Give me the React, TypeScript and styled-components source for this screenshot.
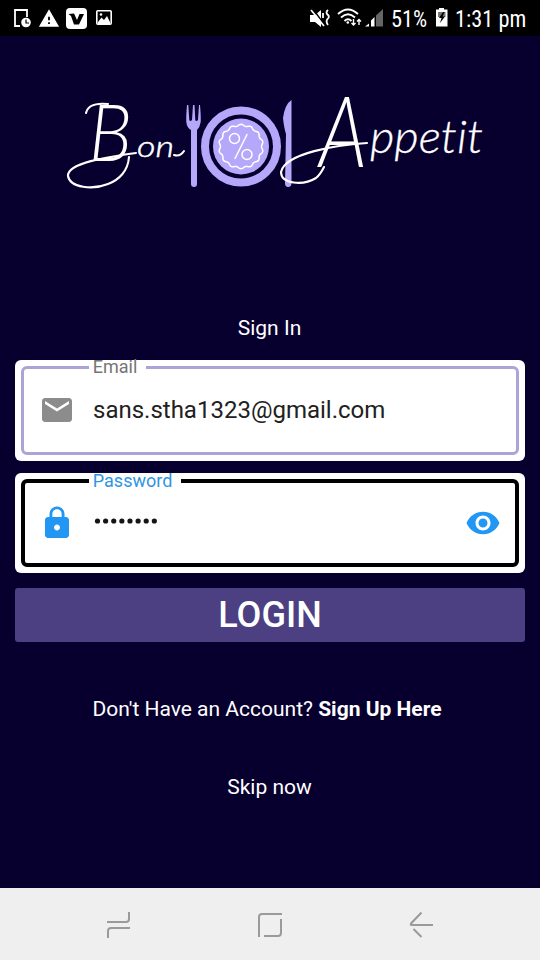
import React from "react";
import styled, { createGlobalStyle } from "styled-components";
import { MdEmail, MdLock, MdVisibility, MdWarning } from "react-icons/md";

const GlobalStyle = createGlobalStyle`
  * { box-sizing: border-box; }
  body { margin: 0; background: #07002f; }
`;

const Screen = styled.div`
  width: 540px;
  height: 960px;
  display: flex;
  flex-direction: column;
  background: #07002f;
  color: #fff;
  font-family: Roboto, sans-serif;
  overflow: hidden;
`;

const StatusBar = styled.header`
  height: 36px;
  flex: none;
  display: flex;
  justify-content: space-between;
  background: #000;
`;

const StatusText = styled.span<{ $width: number }>`
  display: inline-block;
  width: ${(p) => p.$width}px;
  font-family: "Roboto Condensed", Roboto, sans-serif;
  font-size: 24px;
  line-height: 38px;
  white-space: nowrap;
  transform: scaleX(0.93);
  transform-origin: left;
`;

const StatusGroup = styled.div`
  display: flex;
`;

const Content = styled.main`
  flex: 1;
  display: flex;
  flex-direction: column;
  align-items: center;
  padding: 49px 15px 0;
`;

const Logo = styled.svg`
  width: 430px;
  height: 115px;
  margin-left: 10px;
  flex: none;
  overflow: visible;
  font-variant-ligatures: none;
`;

const Heading = styled.h1`
  margin: 115px 1px 0 0;
  height: 26px;
  font-size: 21px;
  font-weight: 400;
  line-height: 26px;
`;

const FieldCard = styled.div<{ $top: number }>`
  width: 510px;
  height: 100.5px;
  flex: none;
  margin-top: ${(p) => p.$top}px;
  padding: 6px;
  border-radius: 6px;
  background: #fff;
`;

const FieldOutline = styled.div<{ $color: string; $line: number }>`
  position: relative;
  height: 88.5px;
  display: flex;
  align-items: center;
  padding: 0 ${(p) => 18 - p.$line}px;
  border: ${(p) => p.$line}px solid ${(p) => p.$color};
  border-radius: 6px;
`;

const FieldLabel = styled.label<{ $color: string; $width: number; $line: number; $top: number }>`
  position: absolute;
  left: ${(p) => 67.5 - p.$line}px;
  top: ${(p) => p.$top - p.$line}px;
  width: ${(p) => p.$width}px;
  padding-left: 4.3px;
  background: #fff;
  color: ${(p) => p.$color};
  font-size: 18px;
  line-height: 14px;
  white-space: nowrap;
`;

const FieldIcon = styled.span<{ $color: string }>`
  display: flex;
  width: 36px;
  color: ${(p) => p.$color};
`;

const TrailingIcon = styled(FieldIcon)`
  margin-right: 1px;
`;

const FieldValue = styled.span`
  flex: 1;
  margin-left: 18px;
  color: #212121;
  font-size: 24px;
  line-height: 30px;
`;

const Mask = styled.svg`
  flex: 1;
  height: 8px;
  margin: -3px 0 0 18px;
  fill: #151515;
`;

const LoginButton = styled.button`
  width: 510px;
  height: 54px;
  flex: none;
  margin-top: 15px;
  padding: 0;
  border: 0;
  border-radius: 3px;
  background: #4c4083;
  color: #fff;
  font: 500 36px/54px Roboto, sans-serif;
`;

const Prompt = styled.p<{ $top: number; $shift: number }>`
  margin: ${(p) => p.$top}px ${(p) => p.$shift}px 0 0;
  font-size: 21px;
  line-height: 26px;
  white-space: nowrap;
`;

const NavBar = styled.nav`
  height: 72px;
  flex: none;
  display: grid;
  grid-template-columns: repeat(3, 28px);
  column-gap: 123px;
  justify-content: center;
  align-items: center;
  background: #efefef;
`;

const NavIcon = styled.svg`
  width: 28px;
  height: 28px;
  fill: none;
  stroke: #9a9a9a;
  stroke-width: 2;
`;

function badgePath() {
  const pts: string[] = [];
  const n = 14;
  for (let i = 0; i <= 140; i++) {
    const a = (i / 140) * Math.PI * 2;
    const r = 21.4 + 0.9 * Math.cos(n * a);
    pts.push(`${(241 + r * Math.sin(a)).toFixed(2)} ${(146.5 - r * Math.cos(a)).toFixed(2)}`);
  }
  return `M${pts.join("L")}Z`;
}

function BrandLogo() {
  return (
    <Logo viewBox="60 85 430 115" aria-label="Bon Appetit">
      <g fill="#b5a7fa">
        <path d="M187 105Q186 116 186.300 122Q187 128 191 130V184Q191 187 194 187Q197 187 197 184V130Q200 127 200.700 122Q201 116 200 105H199L198 120Q196 122 195.300 120L194.500 105H193L192 120Q190 122 189.300 120L188.300 105Z" />
        <path d="M291.500 100Q285 104 283 118Q284 128 286 134L285 183Q285 187 288 187Q291.500 187 291.500 183Z" />
        <circle cx="241" cy="146.500" r="28" />
      </g>
      <circle cx="241" cy="146.500" r="36" fill="none" stroke="#b5a7fa" strokeWidth="8" />
      <g fill="none" stroke="#fff" strokeWidth="1.500" strokeLinecap="round">
        <path d={badgePath()} />
        <circle cx="234.500" cy="138.500" r="5" />
        <circle cx="247" cy="154.500" r="5" />
        <path d="M247 134.500L235 158.500" />
      </g>
      <g fill="none" stroke="#fff" strokeWidth="2.100" strokeLinecap="round">
        <path d="M136 153C107 157 67 163 68 176C70 188 93 190 108 184C119 180 128 171 129 157" />
        <path d="M86 113C88 104 98 103 108 104" />
        <path d="M367 143C337 145 285 153 281 172C281 184 303 186 316 178C320 175 322 171 324 167" />
        <path d="M174 155Q180 157 184 151" />
      </g>
      <g fill="#fff" fontFamily="Lato, sans-serif" fontStyle="italic" fontWeight="300">
        <text y="161">
          <tspan x="89" fontSize="79" textLength="43" lengthAdjust="spacingAndGlyphs">B</tspan>
          <tspan x="137" y="157" fontSize="29" stroke="#fff" strokeWidth="0.5" textLength="37" lengthAdjust="spacingAndGlyphs">on</tspan>
        </text>
        <text y="167">
          <tspan x="319" fontSize="99" textLength="48" lengthAdjust="spacingAndGlyphs">A</tspan>
          <tspan x="370" y="153" fontSize="45" stroke="#fff" strokeWidth="0.3" textLength="113" lengthAdjust="spacingAndGlyphs">ppetit</tspan>
        </text>
      </g>
    </Logo>
  );
}

function NotificationIcons() {
  return (
    <svg width="120" height="36" viewBox="0 0 120 36">
      <path d="M27 17V10H15V26H20" fill="none" stroke="#fff" strokeWidth="1.800" />
      <circle cx="26" cy="22.500" r="4.800" fill="#fff" />
      <path d="M26 19.500V23H29" fill="none" stroke="#000" strokeWidth="1.200" />
      <MdWarning x="38" y="7.500" size="22" color="#fff" />
      <rect x="66" y="8" width="21" height="21" rx="4" fill="#fff" />
      <path d="M68.500 14L74 13.500L77 20L79.500 14H84L79 24.500H74L71 16Z" fill="#000" />
      <rect x="96.800" y="10.800" width="14.400" height="13.400" rx="1" fill="none" stroke="#fff" strokeWidth="1.600" />
      <path d="M98 22L101.500 17.500L104 20L107 16L110 22V24H98Z" fill="#fff" />
      <circle cx="101" cy="14.500" r="1.300" fill="#fff" />
    </svg>
  );
}

function SignalIcons() {
  return (
    <svg width="83" height="36" viewBox="308 0 83 36">
      <path d="M310 15H315L321 10V27L315 22H310Z" fill="#fff" />
      <path d="M313 9L326 27" stroke="#000" strokeWidth="1.500" />
      <path d="M311 10L324 26" stroke="#fff" strokeWidth="1.700" />
      <path d="M328 10Q325 12.500 328 15Q330 17 327.500 19Q325.500 21.500 328 25M323 13V18" fill="none" stroke="#fff" strokeWidth="1.800" />
      <g fill="none" stroke="#fff" strokeWidth="1.800">
        <path d="M338 14Q348 5 358 14M341 17.500Q348 11 355 17.500M344.500 21Q348 17.500 351.500 21" />
        <path d="M353.500 19V25M351.500 23L353.500 25L355.500 23M359 25V19.500M357 21.500L359 19.500L361 21.500" strokeWidth="1.400" />
      </g>
      <circle cx="347.800" cy="22.500" r="1.300" fill="#fff" />
      <path d="M365 26.500L369 23.500V26.500ZM371 26.500V20.500L374.500 17V26.500Z" fill="#fff" />
      <path d="M376 26.500V15.500L383 9V26.500Z" fill="#666" />
    </svg>
  );
}

const BatterySvg = styled.svg`
  margin-right: 6px;
`;

function BatteryIcon() {
  return (
    <BatterySvg width="14" height="36" viewBox="0 0 14 36">
      <path d="M4 8H9V9.500H12.500V26.500H1V9.500H4Z" fill="#fff" />
      <path d="M3 12H10.500V17H3Z" fill="#777" />
      <path d="M8 12L4 18H6.500L5 23L10 16.500H7.500L9.500 12Z" fill="#000" />
    </BatterySvg>
  );
}

export default function App() {
  return (
    <>
      <GlobalStyle />
      <Screen>
        <StatusBar>
          <NotificationIcons />
          <StatusGroup>
            <SignalIcons />
            <StatusText $width={44}>51%</StatusText>
            <BatteryIcon />
            <StatusText $width={85}>1:31 pm</StatusText>
          </StatusGroup>
        </StatusBar>
        <Content>
          <BrandLogo />
          <Heading>Sign In</Heading>
          <FieldCard $top={19}>
            <FieldOutline $color="#aca4d6" $line={3}>
              <FieldLabel $color="#757575" $width={57} $line={3} $top={-6}>Email</FieldLabel>
              <FieldIcon $color="#8c8c8c"><MdEmail size={36} /></FieldIcon>
              <FieldValue>sans.stha1323@gmail.com</FieldValue>
            </FieldOutline>
          </FieldCard>
          <FieldCard $top={12}>
            <FieldOutline $color="#000" $line={4.5}>
              <FieldLabel $color="#2f95e3" $width={92} $line={4} $top={-5}>Password</FieldLabel>
              <FieldIcon $color="#2196f3"><MdLock size={36} /></FieldIcon>
              <Mask aria-label="Password">
                {Array.from({ length: 8 }, (_, i) => (
                  <circle key={i} cx={4.5 + i * 8.12} cy={4} r={2.6} />
                ))}
              </Mask>
              <TrailingIcon $color="#2196f3"><MdVisibility size={36} /></TrailingIcon>
            </FieldOutline>
          </FieldCard>
          <LoginButton>LOGIN</LoginButton>
          <Prompt $top={54} $shift={6}>Don't Have an Account? <b>Sign Up Here</b></Prompt>
          <Prompt $top={52} $shift={1}>Skip now</Prompt>
        </Content>
        <NavBar>
          <NavIcon viewBox="0 0 28 28"><path d="M2 12H21Q24 12 24 9V2M25 18H6Q3 18 3 21V28" /></NavIcon>
          <NavIcon viewBox="0 0 28 28"><path d="M3 27V7Q3 4 6 4H26M25 9V23Q25 26 22 26H8" /></NavIcon>
          <NavIcon viewBox="0 0 28 28"><path d="M14.500 2.500L4 13.500Q3 15 5 15H26M6.500 19L14.500 27" /></NavIcon>
        </NavBar>
      </Screen>
    </>
  );
}
